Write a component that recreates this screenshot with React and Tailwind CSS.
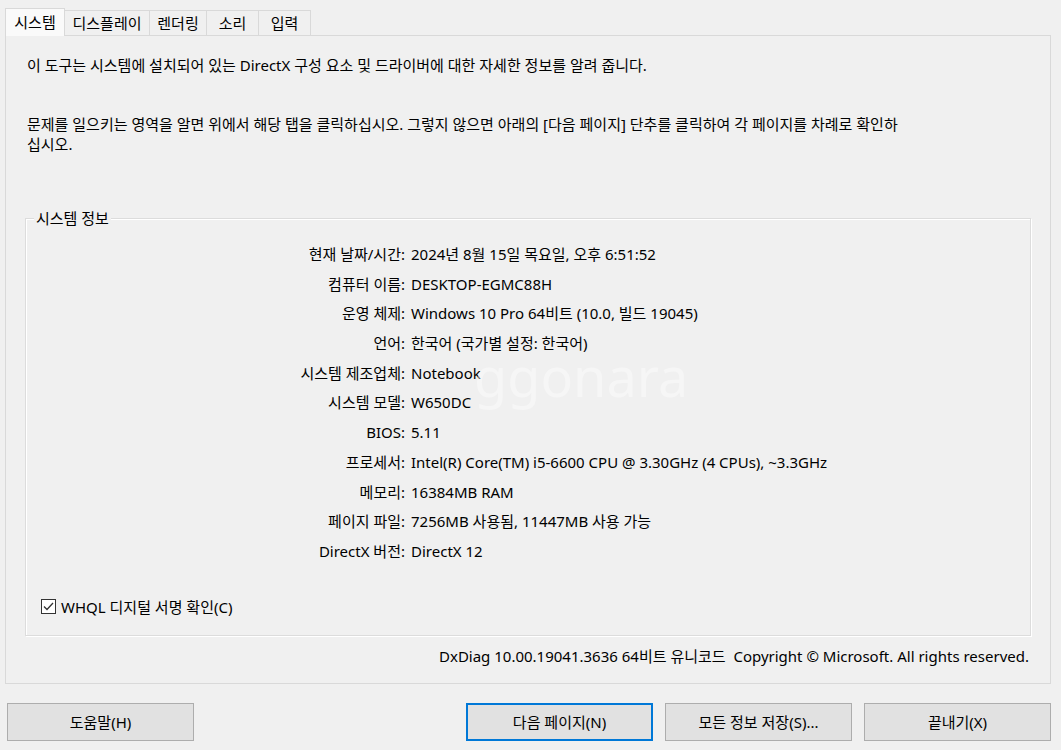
import React from 'react';

const rows = [
  ['현재 날짜/시간:', '2024년 8월 15일 목요일, 오후 6:51:52'],
  ['컴퓨터 이름:', 'DESKTOP-EGMC88H'],
  ['운영 체제:', 'Windows 10 Pro 64비트 (10.0, 빌드 19045)'],
  ['언어:', '한국어 (국가별 설정: 한국어)'],
  ['시스템 제조업체:', 'Notebook'],
  ['시스템 모델:', 'W650DC'],
  ['BIOS:', '5.11'],
  ['프로세서:', 'Intel(R) Core(TM) i5-6600 CPU @ 3.30GHz (4 CPUs), ~3.3GHz'],
  ['메모리:', '16384MB RAM'],
  ['페이지 파일:', '7256MB 사용됨, 11447MB 사용 가능'],
  ['DirectX 버전:', 'DirectX 12'],
];

const tabs = [
  { label: '디스플레이', w: 'w-[85px]' },
  { label: '렌더링', w: 'w-[57px]' },
  { label: '소리', w: 'w-[52px]' },
  { label: '입력', w: 'w-[52px]' },
];

const Button = ({ children, focused, className = '' }) => (
  <button
    className={`h-[38px] w-[187px] bg-[#e1e1e1] text-[15px] text-black flex items-center justify-center ${
      focused ? 'border-2 border-[#0078d7]' : 'border border-[#adadad]'
    } ${className}`}
  >
    {children}
  </button>
);

export default function App() {
  return (
    <div
      className="relative w-[1061px] h-[750px] bg-[#f0f0f0] overflow-hidden text-[15px] text-black"
      style={{ fontFamily: '"Noto Sans", "Noto Sans CJK KR", sans-serif' }}
    >
      {/* Tabs */}
      <div className="flex items-end pl-[5px] pt-[7px] h-[35px]">
        <div className="h-[28px] w-[60px] bg-[#fafafa] border border-b-0 border-[#d9d9d9] flex items-center justify-center relative z-10 -mb-px">
          시스템
        </div>
        {tabs.map((t) => (
          <div
            key={t.label}
            className={`h-[25px] ${t.w} bg-[#f0f0f0] border border-l-0 border-b-0 border-[#d9d9d9] flex items-center justify-center`}
          >
            {t.label}
          </div>
        ))}
      </div>

      {/* Panel */}
      <div className="mx-[5px] w-[1046px] h-[649px] border border-[#d9d9d9] flex flex-col pl-[21px] pr-[20px]">
        <p className="mt-[19px] leading-[20px]">
          이 도구는 시스템에 설치되어 있는 DirectX 구성 요소 및 드라이버에 대한 자세한 정보를 알려 줍니다.
        </p>
        <p className="mt-[39px] leading-[20px]">
          문제를 일으키는 영역을 알면 위에서 해당 탭을 클릭하십시오. 그렇지 않으면 아래의 [다음 페이지] 단추를 클릭하여 각 페이지를 차례로 확인하
          <br />
          십시오.
        </p>

        {/* Group box */}
        <div className="relative mt-[64px] ml-[-2px] w-[1006px] h-[418px] border border-[#dcdcdc] shadow-[inset_1px_1px_0_#ffffff,1px_1px_0_#ffffff]">
          <span className="absolute left-[8px] top-[-11px] px-[2px] bg-[#f0f0f0] leading-[20px]">
            시스템 정보
          </span>

          <div className="grid grid-cols-[379px_1fr] gap-x-[6px] mt-[21px]">
            {rows.map(([k, v]) => (
              <React.Fragment key={k}>
                <div className="text-right leading-[29.7px] h-[29.7px]">{k}</div>
                <div className="leading-[29.7px] h-[29.7px] whitespace-nowrap">{v}</div>
              </React.Fragment>
            ))}
          </div>

          <div className="flex items-center mt-[29px] ml-[15px]">
            <div className="w-[15px] h-[15px] border border-[#333333] bg-white flex items-center justify-center">
              <svg width="11" height="9" viewBox="0 0 11 9">
                <path d="M1 4.5 L4 7.5 L10 1" fill="none" stroke="#333333" strokeWidth="1.3" />
              </svg>
            </div>
            <span className="ml-[5px]">WHQL 디지털 서명 확인(C)</span>
          </div>
        </div>

        <div className="mt-[10px] text-right pr-[1px] leading-[20px]">
          DxDiag 10.00.19041.3636 64비트 유니코드&nbsp;&nbsp;Copyright © Microsoft. All rights reserved.
        </div>
      </div>

      {/* Bottom buttons */}
      <div className="flex mt-[19px] pl-[7px]">
        <Button>도움말(H)</Button>
        <div className="flex gap-[12px] ml-[272px]">
          <Button focused>다음 페이지(N)</Button>
          <Button>모든 정보 저장(S)...</Button>
          <Button>끝내기(X)</Button>
        </div>
      </div>

      {/* Watermark */}
      <div className="absolute left-[474px] top-[356px] text-[54px] text-white/40 leading-[40px] pointer-events-none">
        ggonara
      </div>
    </div>
  );
}
